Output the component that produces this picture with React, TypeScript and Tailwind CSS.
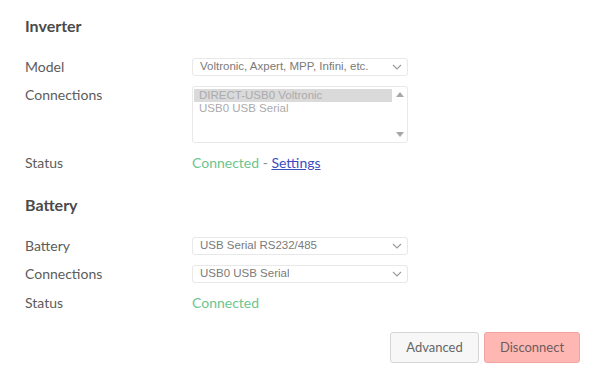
import React from 'react';

function Chevron() {
  return (
    <svg width="10" height="6" viewBox="0 0 10 6" className="shrink-0">
      <path d="M1 1l4 4 4-4" fill="none" stroke="#999" strokeWidth="1.1" />
    </svg>
  );
}

function Select({ value }: { value: string }) {
  return (
    <div className="w-[216px] h-[18px] flex items-center justify-between pl-[7px] pr-[5px] border border-[#e8e8e8] rounded-[3px] bg-white text-[11.5px] text-[#7a7a7a] font-['Liberation_Sans',Arial,sans-serif]">
      <span className="truncate">{value}</span>
      <Chevron />
    </div>
  );
}

function ListBox({ items }: { items: string[] }) {
  return (
    <div className="w-[216px] h-[57px] flex border border-[#e8e8e8] rounded-[3px] bg-white font-['Liberation_Sans',Arial,sans-serif] text-[11.5px] text-[#ababab]">
      <div className="flex-1 pt-[2px] pl-[1px]">
        {items.map((item, i) => (
          <div
            key={item}
            className={`h-[13px] leading-[13px] pl-[5px] ${i === 0 ? 'bg-[#dadada]' : ''}`}
          >
            {item}
          </div>
        ))}
      </div>
      <div className="w-[15px] flex flex-col justify-between items-center py-[5px]">
        <svg width="8" height="5" viewBox="0 0 8 5">
          <path d="M0 5L4 0l4 5z" fill="#a8a8a8" />
        </svg>
        <svg width="8" height="5" viewBox="0 0 8 5">
          <path d="M0 0h8L4 5z" fill="#a8a8a8" />
        </svg>
      </div>
    </div>
  );
}

function Row({ label, children, top }: { label: string; children: React.ReactNode; top?: boolean }) {
  return (
    <div className={`flex ${top ? 'items-start' : 'items-center'}`}>
      <div className="w-[167px] text-[14px] leading-[18px] text-[#5c5c5c]">{label}</div>
      {children}
    </div>
  );
}

export default function App() {
  return (
    <main className="w-[600px] h-[371px] bg-white font-['Lato','Noto_Sans',sans-serif] pl-[25px] pr-[20px] pt-[16px]">
      {/* Inverter */}
      <h2 className="text-[16px] leading-[20px] font-bold text-[#4a4a4a]">Inverter</h2>
      <div className="mt-[22px] flex flex-col gap-[10px]">
        <Row label="Model">
          <Select value="Voltronic, Axpert, MPP, Infini, etc." />
        </Row>
        <Row label="Connections" top>
          <ListBox items={['DIRECT-USB0 Voltronic', 'USB0 USB Serial']} />
        </Row>
        <Row label="Status">
          <div className="text-[14px] leading-[20px]">
            <span className="text-[#6cc58e]">Connected</span>
            <span className="text-[#888]"> - </span>
            <a href="#" className="text-[#3c4dc2] underline">Settings</a>
          </div>
        </Row>
      </div>

      {/* Battery */}
      <h2 className="mt-[22px] text-[16px] leading-[20px] font-bold text-[#4a4a4a]">Battery</h2>
      <div className="mt-[22px] flex flex-col gap-[10px]">
        <Row label="Battery">
          <Select value="USB Serial RS232/485" />
        </Row>
        <Row label="Connections">
          <Select value="USB0 USB Serial" />
        </Row>
        <Row label="Status">
          <span className="text-[14px] leading-[20px] text-[#6cc58e]">Connected</span>
        </Row>
      </div>

      <div className="mt-[19px] flex justify-end gap-[5px]">
        <button className="w-[89px] h-[31px] rounded-[3px] border border-[#d6d6d6] bg-[#f7f7f7] text-[13px] text-[#666]">
          Advanced
        </button>
        <button className="w-[96px] h-[31px] rounded-[3px] border border-[#f3a4a1] bg-[#ffb7b4] text-[13px] text-[#6e5c5c]">
          Disconnect
        </button>
      </div>
    </main>
  );
}
